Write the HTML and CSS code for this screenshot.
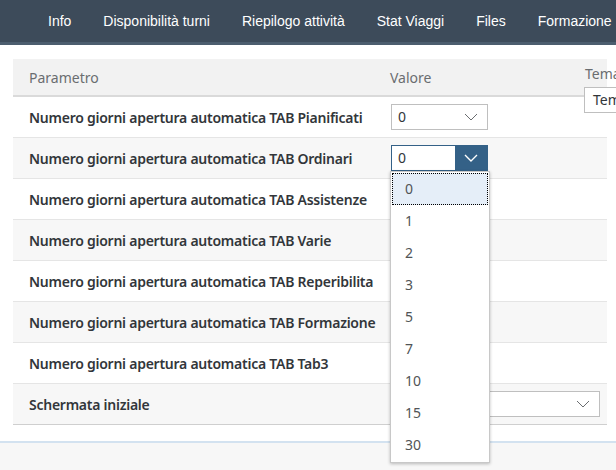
FILE: index.html
```html
<!DOCTYPE html>
<html lang="it">
<head>
  <meta charset="UTF-8">
  <title>Parametri</title>
  <link rel="stylesheet" href="styles.css">
</head>
<body>

  <!-- Shell navigation -->
  <header class="shell">
    <a class="nav-item">Info</a>
    <a class="nav-item">Disponibilità turni</a>
    <a class="nav-item">Riepilogo attività</a>
    <a class="nav-item">Stat Viaggi</a>
    <a class="nav-item">Files</a>
    <a class="nav-item">Formazione</a>
  </header>

  <main class="page">
    <table class="params">
      <colgroup>
        <col class="col-name">
        <col class="col-value">
        <col class="col-theme">
      </colgroup>
      <thead>
        <tr>
          <th>Parametro</th>
          <th class="value-head">Valore</th>
          <th class="theme-head">
            Tema
            <div class="theme-select">Tema standard</div>
          </th>
        </tr>
      </thead>
      <tbody>
        <tr>
          <td>Numero giorni apertura automatica TAB Pianificati</td>
          <td class="value-cell">
            <div class="select">
              <span class="select-value">0</span>
              <span class="select-arrow"><svg width="14" height="8" viewBox="0 0 14 8"><path d="M1 1 L7 7 L13 1" fill="none" stroke="currentColor" stroke-width="1"/></svg></span>
            </div>
          </td>
          <td></td>
        </tr>
        <tr>
          <td>Numero giorni apertura automatica TAB Ordinari</td>
          <td class="value-cell">
            <div class="select open">
              <span class="select-value">0</span>
              <span class="select-arrow"><svg width="14" height="8" viewBox="0 0 14 8"><path d="M1 1 L7 7 L13 1" fill="none" stroke="currentColor" stroke-width="1.4"/></svg></span>
            </div>
            <!-- Open list of the focused select -->
            <ul class="dropdown">
              <li class="active">0</li>
              <li>1</li>
              <li>2</li>
              <li>3</li>
              <li>5</li>
              <li>7</li>
              <li>10</li>
              <li>15</li>
              <li>30</li>
            </ul>
          </td>
          <td></td>
        </tr>
        <tr>
          <td>Numero giorni apertura automatica TAB Assistenze</td>
          <td></td>
          <td></td>
        </tr>
        <tr>
          <td>Numero giorni apertura automatica TAB Varie</td>
          <td></td>
          <td></td>
        </tr>
        <tr>
          <td>Numero giorni apertura automatica TAB Reperibilita</td>
          <td></td>
          <td></td>
        </tr>
        <tr>
          <td>Numero giorni apertura automatica TAB Formazione</td>
          <td></td>
          <td></td>
        </tr>
        <tr>
          <td>Numero giorni apertura automatica TAB Tab3</td>
          <td></td>
          <td></td>
        </tr>
        <tr>
          <td>Schermata iniziale</td>
          <td class="value-cell">
            <div class="select wide">
              <span class="select-value"></span>
              <span class="select-arrow"><svg width="14" height="8" viewBox="0 0 14 8"><path d="M1 1 L7 7 L13 1" fill="none" stroke="currentColor" stroke-width="1"/></svg></span>
            </div>
          </td>
          <td></td>
        </tr>
      </tbody>
    </table>
  </main>

  <footer class="footer"></footer>

</body>
</html>
```

FILE: styles.css
```css
body {
  margin: 0;
  font-family: 'Noto Sans', 'Liberation Sans', sans-serif;
  background-color: #f7f7f7;
  color: #32363a;
  height: 470px;
  overflow: hidden;
}

.shell {
  height: 42px;
  background-color: #3d4b5a;
  border-bottom: 3px solid #4c5d6e;
  display: flex;
  align-items: center;
  gap: 32px;
  padding-left: 48px;
  white-space: nowrap;
}

.nav-item {
  color: #fff;
  font-family: 'Liberation Sans', sans-serif;
  font-size: 14px;
}

.page {
  background-color: #fff;
  padding: 14px 0 16px 13px;
  border-bottom: 2px solid #d3e2f0;
}

.params {
  width: 594px;
  border-collapse: collapse;
  table-layout: fixed;
  font-size: 14px;
}

.col-name {
  width: 377px;
}

.col-value {
  width: 195px;
}

.params th {
  height: 36px;
  padding: 0 0 0 16px;
  text-align: left;
  font-weight: normal;
  color: #6a6d70;
  background-color: #f2f2f2;
  border-bottom: 2px solid #dadada;
  white-space: nowrap;
}

.params th.value-head {
  padding-left: 0;
}

.params th.theme-head {
  height: 31px;
  padding: 5px 0 0 0;
  position: relative;
  overflow: visible;
  vertical-align: top;
}

.theme-select {
  position: absolute;
  top: 28px;
  left: -1px;
  width: 80px;
  height: 24px;
  line-height: 24px;
  padding-left: 8px;
  background: #fff;
  border: 1px solid #bfbfbf;
  color: #32363a;
  z-index: 2;
}

.params td {
  height: 40px;
  padding: 0 0 0 16px;
  font-weight: 600;
  letter-spacing: -0.25px;
  border-bottom: 1px solid #e5e5e5;
  white-space: nowrap;
}

.params tbody tr:nth-child(even) td {
  background-color: #f7f7f7;
}

.params tbody tr:last-child td {
  border-bottom-color: #cfcfcf;
}

.params td.value-cell {
  padding-left: 1px;
  letter-spacing: normal;
  position: relative;
  overflow: visible;
}

.select {
  width: 95px;
  height: 24px;
  display: flex;
  align-items: stretch;
  background: #fff;
  border: 1px solid #bfbfbf;
  font-weight: normal;
}

.select-value {
  flex: 1;
  padding-left: 6px;
  line-height: 24px;
}

.select-arrow {
  width: 32px;
  display: flex;
  align-items: center;
  justify-content: center;
  color: #6a6d70;
}

.select.open {
  border-color: #346187;
}

.select.open .select-arrow {
  background-color: #346187;
  color: #fff;
}

.select.wide {
  width: 207px;
}

.dropdown {
  position: absolute;
  top: 33px;
  left: 0;
  width: 98px;
  margin: 0;
  padding: 1px 0;
  list-style: none;
  background: #fff;
  border: 1px solid #c8c8c8;
  box-shadow: 0 1px 3px rgba(0, 0, 0, 0.25);
  z-index: 5;
}

.dropdown li {
  height: 32px;
  line-height: 32px;
  padding-left: 13px;
  margin: 0 1px;
  font-weight: normal;
  color: #515456;
}

.dropdown li.active {
  background-color: #e5eef8;
  outline: 1px dotted #000;
  outline-offset: -1px;
}

.footer {
  height: 30px;
}
```
